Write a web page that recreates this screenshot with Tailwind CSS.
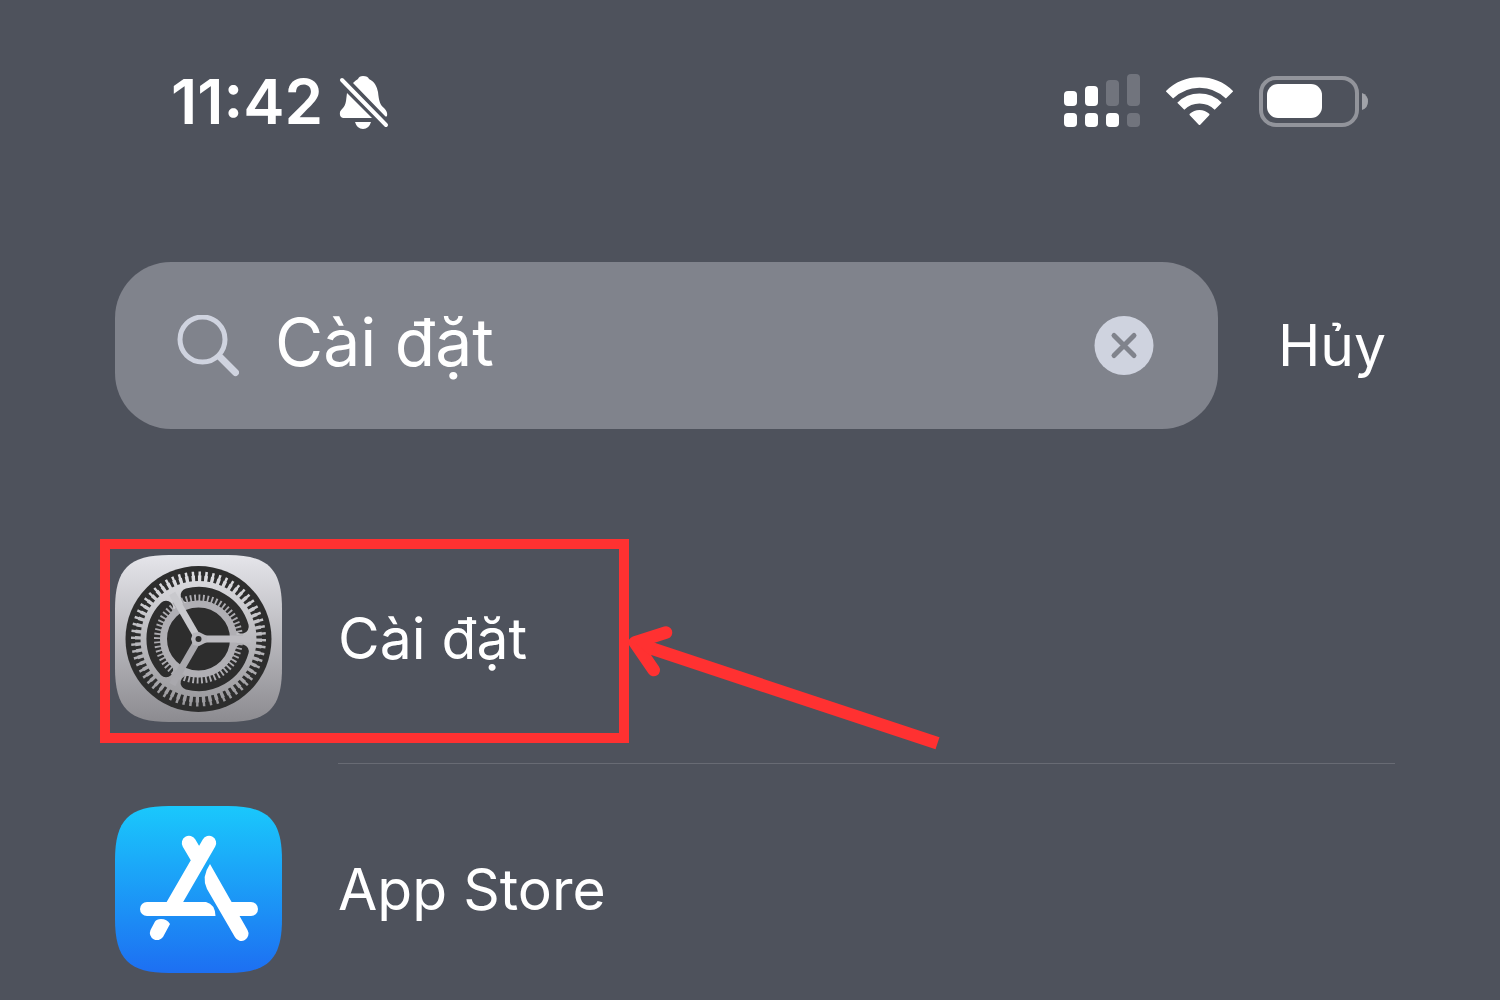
<!DOCTYPE html>
<html lang="vi">
<head>
    <meta charset="UTF-8">
    <meta name="viewport" content="width=device-width, initial-scale=1.0">
    <title>Cài đặt</title>
    <script src="https://cdn.jsdelivr.net/npm/@tailwindcss/browser@4"></script>
</head>
<body class="min-h-screen bg-[#4e525c] pl-[115px] pr-[105px] font-['Inter','Noto_Sans',sans-serif] text-white">

    <!-- status bar -->
    <header class="flex items-center justify-between pt-[60px] pl-14 pr-[26px]">
        <div class="flex items-center gap-4">
            <time class="text-[62px] leading-[84px] font-semibold">11:42</time>
            <svg class="h-14 w-[52px]" viewBox="0 0 52 56" fill="#fff" role="img" aria-label="Im lặng">
                <path d="M14 9Q17 6 19 5Q20 2 24 2Q29 2 30 5C36 8 38 13 39 18C40 27 41 31 45 34Q49 38 48 42Q47 43 46 42Z" />
                <path d="M8 19L33 44H4Q0 43 1 38C2 35 6 34 7 27Z" />
                <path d="M16 48H32Q30 55 24 55Q18 55 16 48Z" />
                <path d="M3 6L47 51" stroke="#fff" stroke-width="4" stroke-linecap="round" />
            </svg>
        </div>
        <div class="flex items-center gap-[26px] pb-[3px]">
            <svg class="h-[53px] w-[76px]" viewBox="0 0 76 53" fill="#fff">
                <rect x="0" y="17" width="13" height="15" rx="4" />
                <rect x="21" y="12" width="13" height="20" rx="4" />
                <rect x="42" y="6" width="13" height="26" rx="4" fill="#71747d" />
                <rect x="63" y="0" width="13" height="32" rx="4" fill="#71747d" />
                <rect x="0" y="39" width="13" height="14" rx="4" />
                <rect x="21" y="39" width="13" height="14" rx="4" />
                <rect x="42" y="39" width="13" height="14" rx="4" />
                <rect x="63" y="39" width="13" height="14" rx="4" fill="#71747d" />
            </svg>
            <svg class="h-[50px] w-[67px]" viewBox="0 0 67 50" fill="none" stroke="#fff">
                <path d="M3.400 18.900A42.600 42.600 0 0 1 63.600 18.900" stroke-width="10.500" />
                <path d="M14.800 30.300A26.500 26.500 0 0 1 52.200 30.300" stroke-width="10" />
                <path d="M33.500 48L24.500 38.500A13 13 0 0 1 42.500 38.500Z" fill="#fff" stroke-width="2" stroke-linejoin="round" />
            </svg>
            <svg class="h-[52px] w-[110px]" viewBox="0 0 110 52">
                <rect x="2" y="3" width="96" height="47" rx="15" fill="none" stroke="#92949b" stroke-width="4" />
                <rect x="8" y="9" width="55" height="34" rx="11" fill="#fff" />
                <path d="M103 18Q109 20 109 26.500Q109 33 103 35Z" fill="#a1a3a9" />
            </svg>
        </div>
    </header>

    <!-- search -->
    <form class="mt-[118px] flex items-center gap-[60px]">
        <div class="flex h-[167px] min-w-0 flex-1 items-center rounded-[56px] bg-[#80838c] pl-[62px] pr-16">
            <svg class="h-[62px] w-[62px] shrink-0" viewBox="0 0 62 62" fill="none" stroke="#cfd3df" stroke-linecap="round">
                <circle cx="25.500" cy="24.500" r="22.500" stroke-width="5" />
                <path d="M43 42L58.500 57.500" stroke-width="7" />
            </svg>
            <input type="text" aria-label="Tìm kiếm" value="Cài đặt" class="ml-9 h-[100px] min-w-0 flex-1 bg-transparent pb-2 text-[66px] outline-none">
            <button type="button" aria-label="Xóa" class="shrink-0">
                <svg class="h-[60px] w-[60px]" viewBox="0 0 60 60">
                    <circle cx="30" cy="29.500" r="29.500" fill="#cfd3df" />
                    <path d="M20 19.500L40 39.500M40 19.500L20 39.500" stroke="#80838c" stroke-width="5" stroke-linecap="round" />
                </svg>
            </button>
        </div>
        <button type="button" class="w-[117px] shrink-0 text-left text-[57px] leading-[70px]">Hủy</button>
    </form>

    <!-- results -->
    <ul class="mt-[84px]">
        <li class="relative">
            <a href="#" class="flex">
                <svg class="mt-[42px] h-[167px] w-[167px] shrink-0" viewBox="0 0 167 167">
                    <defs>
                        <linearGradient id="silver" x1="0" y1="0" x2="0" y2="1">
                            <stop offset="0" stop-color="#e5e5ea" />
                            <stop offset="1" stop-color="#8c8b90" />
                        </linearGradient>
                        <linearGradient id="ring" gradientUnits="userSpaceOnUse" x1="0" y1="16" x2="0" y2="151">
                            <stop offset="0" stop-color="#dedee2" />
                            <stop offset="1" stop-color="#98979b" />
                        </linearGradient>
                    </defs>
                    <path d="M0 54C0 14 14 0 54 0H113C153 0 167 14 167 54V113C167 153 153 167 113 167H54C14 167 0 153 0 113Z" fill="url(#silver)" />
                    <circle cx="83.500" cy="84" r="73" fill="#2d2d2d" />
                    <!-- outer gear -->
                    <g fill="none" stroke="url(#ring)">
                        <circle cx="83.500" cy="84" r="62" stroke-width="11" pathLength="600" stroke-dasharray="3.600 6.400" />
                        <circle cx="83.500" cy="84" r="60" stroke-width="7" pathLength="600" stroke-dasharray="5.400 4.600" stroke-dashoffset="0.900" />
                    </g>
                    <circle cx="83.500" cy="84" r="58" fill="url(#ring)" />
                    <!-- slots between the spokes -->
                    <g fill="none" stroke="#2d2d2d" stroke-width="14" stroke-linecap="round">
                        <path id="slot" d="M126.800 96.400A45 45 0 0 1 72.600 127.700" />
                        <use href="#slot" transform="rotate(120 83.500 84)" />
                        <use href="#slot" transform="rotate(240 83.500 84)" />
                    </g>
                    <!-- inner gear -->
                    <circle cx="83.500" cy="84" r="41" fill="none" stroke="#adacb1" stroke-width="7" pathLength="600" stroke-dasharray="4.200 5.800" />
                    <circle cx="83.500" cy="84" r="35" fill="#2d2d2d" stroke="#b0afb4" stroke-width="7" />
                    <g stroke="#bcbbc0" stroke-width="7">
                        <path d="M83.500 84H136" />
                        <path d="M83.500 84L57.200 38.500" stroke="#c9c9cd" />
                        <path d="M83.500 84L57.200 129.500" stroke="#a9a8ad" />
                    </g>
                    <path d="M92 81V87L84 91L78 90L76 84L78 78L84 77Z" fill="#b8b7bc" />
                    <circle cx="83.500" cy="84" r="3" fill="#2d2d2d" />
                </svg>
                <span class="ml-14 flex flex-1 border-b border-[#686b74] pt-[42px] pb-[41px]">
                    <span class="flex h-[167px] items-center text-[57px]">Cài đặt</span>
                </span>
            </a>
            <!-- highlight and arrow -->
            <div class="pointer-events-none absolute top-[26px] -left-[15px] h-[204px] w-[529px] border-10 border-[#ff3131]"></div>
            <svg class="pointer-events-none absolute top-[107px] left-[505px] h-[140px] w-[330px]" viewBox="0 0 330 140" fill="none" stroke="#ff3131" stroke-width="12.600">
                <path d="M16 23.300L317.500 123.300" />
                <path d="M46 12.500L14.800 22.500L33.700 50" stroke-linecap="round" stroke-linejoin="round" />
                <path d="M15 23L36 23L31 36Z" fill="#ff3131" stroke="none" />
            </svg>
        </li>
        <li>
            <a href="#" class="flex pt-[42px]">
                <svg class="h-[167px] w-[167px] shrink-0" viewBox="0 0 167 167" fill="#fff">
                    <defs>
                        <linearGradient id="blue" x1="0" y1="0" x2="0" y2="1">
                            <stop offset="0" stop-color="#1ac8fc" />
                            <stop offset="1" stop-color="#1d6ff2" />
                        </linearGradient>
                    </defs>
                    <path d="M0 54C0 14 14 0 54 0H113C153 0 167 14 167 54V113C167 153 153 167 113 167H54C14 167 0 153 0 113Z" fill="url(#blue)" />
                    <path d="M94 37L57 101M74 37L84 54" fill="none" stroke="#fff" stroke-width="14.400" stroke-linecap="round" />
                    <path d="M32 96H91Q100 98 100.500 110H32A7 7 0 0 1 32 96Z" />
                    <path d="M95 58L132.500 124A7.200 7.200 0 0 1 120 131.300L92 83Q86 71 95 58Z" />
                    <path d="M112 96H136A7 7 0 0 1 136 110H118Z" />
                    <path d="M40 115.500Q41.500 113 46 113Q52 113 55 118L48 131A7.200 7.200 0 0 1 35.500 124Z" />
                </svg>
                <span class="ml-14 flex h-[167px] items-center text-[57px]">App Store</span>
            </a>
        </li>
    </ul>

</body>
</html>
